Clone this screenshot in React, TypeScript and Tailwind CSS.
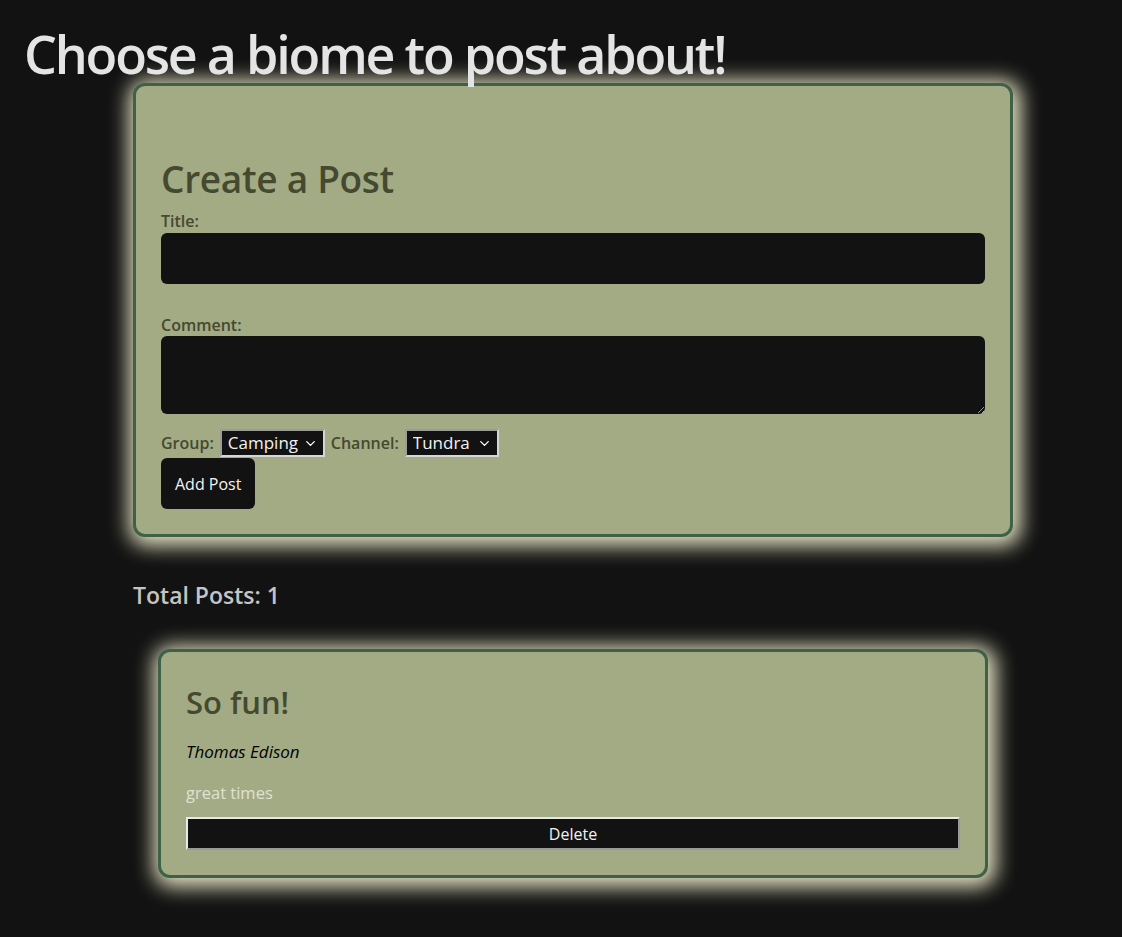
import React, { useState } from "react";
import { ChevronDown } from "lucide-react";

interface Post {
  id: number;
  title: string;
  author: string;
  comment: string;
}

const font = { fontFamily: '"Open Sans", "Noto Sans", sans-serif' };

const Select: React.FC<{ value: string; options: string[]; onChange: (v: string) => void; width: string }> = ({
  value,
  options,
  onChange,
  width,
}) => (
  <div className={`relative inline-flex ${width}`}>
    <select
      value={value}
      onChange={(e) => onChange(e.target.value)}
      className="appearance-none w-full h-[28px] bg-[#121212] text-[#f2f2f2] text-[17px] leading-[24px] font-normal pl-[6px] pr-6 border-2 border-t-[#9c9c9c] border-l-[#9c9c9c] border-b-[#d6d6d6] border-r-[#d6d6d6] outline-none"
    >
      {options.map((o) => (
        <option key={o}>{o}</option>
      ))}
    </select>
    <ChevronDown size={15} strokeWidth={2.2} className="absolute right-[7px] top-[7px] text-white pointer-events-none" />
  </div>
);

export default function App() {
  const [group, setGroup] = useState("Camping");
  const [channel, setChannel] = useState("Tundra");
  const [posts, setPosts] = useState<Post[]>([
    { id: 1, title: "So fun!", author: "Thomas Edison", comment: "great times" },
  ]);

  return (
    <div className="min-h-[937px] bg-[#121212] text-white" style={font}>
      <h1 className="pl-[24px] pt-[22px] text-[52px] leading-[64px] text-[#e4e4e4] font-semibold tracking-[-2.2px]">
        Choose a biome to post about!
      </h1>

      <div className="ml-[133px] w-[880px] -mt-[3px] bg-[#a3ab85] border-[3px] border-[#3e6148] rounded-[12px] shadow-[2px_3px_20px_6px_#e4e2c2] px-[25px] pt-[71px] pb-[25px] text-[#44492f]">
        <h2 className="text-[37px] leading-[44px] font-semibold tracking-[-0.3px]">Create a Post</h2>
        <label className="block text-[16px] leading-[18px] font-semibold mt-[11px]">Title:</label>
        <input className="block w-full h-[51px] bg-[#121212] rounded-[6px] mt-[3px] text-white px-3 outline-none" />
        <label className="block text-[16px] leading-[18px] font-semibold mt-[32px]">Comment:</label>
        <textarea className="block w-full h-[78px] bg-[#121212] rounded-[6px] mt-[2px] text-white px-3 outline-none" />
        <div className="flex items-center gap-[6px] mt-[15px] text-[16px] font-semibold">
          <span>Group:</span>
          <Select value={group} onChange={setGroup} options={["Camping", "Hiking", "Fishing"]} width="w-[105px]" />
          <span>Channel:</span>
          <Select value={channel} onChange={setChannel} options={["Tundra", "Desert", "Forest"]} width="w-[94px]" />
        </div>
        <button className="block h-[51px] px-[14px] bg-[#121212] text-[#f2f2f2] text-[16px] rounded-[6px] mt-[1px]">
          Add Post
        </button>
      </div>

      <h3 className="ml-[133px] mt-[43px] text-[23px] leading-[30px] font-semibold text-[#c4c4c4]">
        Total Posts: {posts.length}
      </h3>

      <div className="mt-[39px] flex flex-col gap-6 pb-[59px]">
        {posts.map((p) => (
          <div
            key={p.id}
            className="ml-[158px] w-[830px] bg-[#a3ab85] border-[3px] border-[#3e6148] rounded-[12px] shadow-[2px_3px_20px_6px_#e4e2c2] px-[25px] pt-[30px] pb-[25px]"
          >
            <h2 className="text-[31px] leading-[40px] font-semibold text-[#44492f]">{p.title}</h2>
            <p className="mt-[19px] italic text-[17px] leading-[22px] text-black">{p.author}</p>
            <p className="mt-[19px] text-[16.5px] leading-[22px] text-[#dfe2d2]">{p.comment}</p>
            <button
              onClick={() => setPosts(posts.filter((x) => x.id !== p.id))}
              className="mt-[13px] w-full h-[33px] bg-[#121212] text-[#f2f2f2] text-[16px] border-2 border-t-[#e8e8e8] border-l-[#e8e8e8] border-b-[#9a9a9a] border-r-[#9a9a9a]"
            >
              Delete
            </button>
          </div>
        ))}
      </div>
    </div>
  );
}
